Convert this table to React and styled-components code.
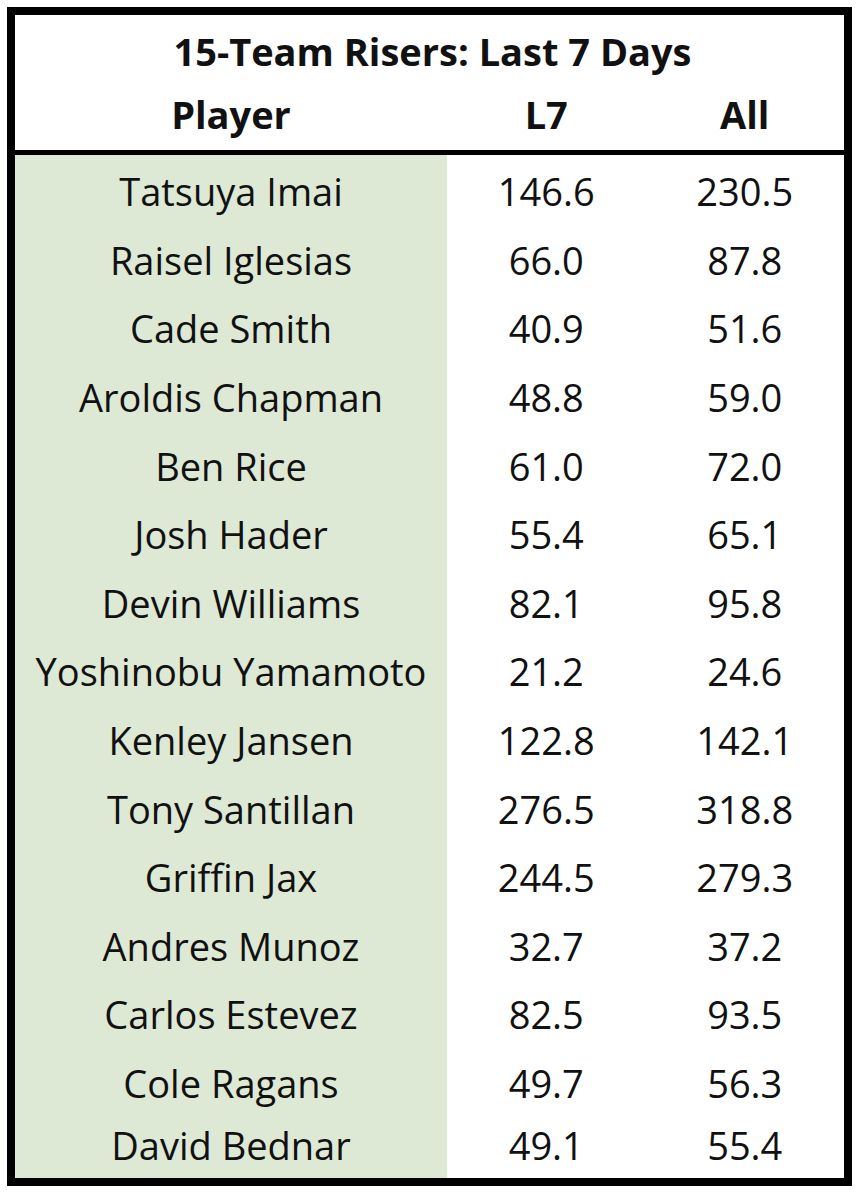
import React from 'react';
import styled, { createGlobalStyle } from 'styled-components';

const rows = [
  ['Tatsuya Imai', '146.6', '230.5'],
  ['Raisel Iglesias', '66.0', '87.8'],
  ['Cade Smith', '40.9', '51.6'],
  ['Aroldis Chapman', '48.8', '59.0'],
  ['Ben Rice', '61.0', '72.0'],
  ['Josh Hader', '55.4', '65.1'],
  ['Devin Williams', '82.1', '95.8'],
  ['Yoshinobu Yamamoto', '21.2', '24.6'],
  ['Kenley Jansen', '122.8', '142.1'],
  ['Tony Santillan', '276.5', '318.8'],
  ['Griffin Jax', '244.5', '279.3'],
  ['Andres Munoz', '32.7', '37.2'],
  ['Carlos Estevez', '82.5', '93.5'],
  ['Cole Ragans', '49.7', '56.3'],
  ['David Bednar', '49.1', '55.4'],
];

const App = () => {
  return (
    <>
      <GlobalStyle />
      <TableWrap>
        <Head>
          <Title>15-Team Risers: Last 7 Days</Title>
          <Row>
            <HeadCell>Player</HeadCell>
            <HeadCell>L7</HeadCell>
            <HeadCell>All</HeadCell>
          </Row>
        </Head>
        <Body>
          {rows.map(([name, l7, all]) => (
            <Row key={name}>
              <Cell $name>{name}</Cell>
              <Cell>{l7}</Cell>
              <Cell>{all}</Cell>
            </Row>
          ))}
        </Body>
      </TableWrap>
    </>
  );
};

export default App;

const GlobalStyle = createGlobalStyle`
  body {
    margin: 0;
    background: #fff;
    font-family: "Open Sans", "Liberation Sans", sans-serif;
    color: #111;
  }
`;

const TableWrap = styled.div`
  margin: 7px 0 0 7px;
  width: 845px;
  box-sizing: border-box;
  border: 8px solid #000;
  background: #fff;
`;

const Head = styled.div`
  height: 135px;
  border-bottom: 5px solid #000;
`;

const Title = styled.div`
  height: 72px;
  display: flex;
  align-items: center;
  justify-content: center;
  font-size: 38px;
  font-weight: 700;
  padding-left: 6px;
`;

const Row = styled.div`
  display: grid;
  grid-template-columns: 432px 1fr 1fr;
`;

const HeadCell = styled.div`
  height: 63px;
  display: flex;
  align-items: center;
  justify-content: center;
  font-size: 38px;
  font-weight: 700;
  padding-bottom: 10px;
  box-sizing: border-box;
`;

const Body = styled.div`
  ${Row}:last-child > div {
    height: 62.6px;
    padding-top: 0;
    padding-bottom: 4px;
  }
`;

const Cell = styled.div`
  height: 68.6px;
  box-sizing: border-box;
  padding-top: 4px;
  display: flex;
  align-items: center;
  justify-content: center;
  font-size: 38px;
  background: ${(props) => (props.$name ? '#dde8d5' : '#fff')};
`;
